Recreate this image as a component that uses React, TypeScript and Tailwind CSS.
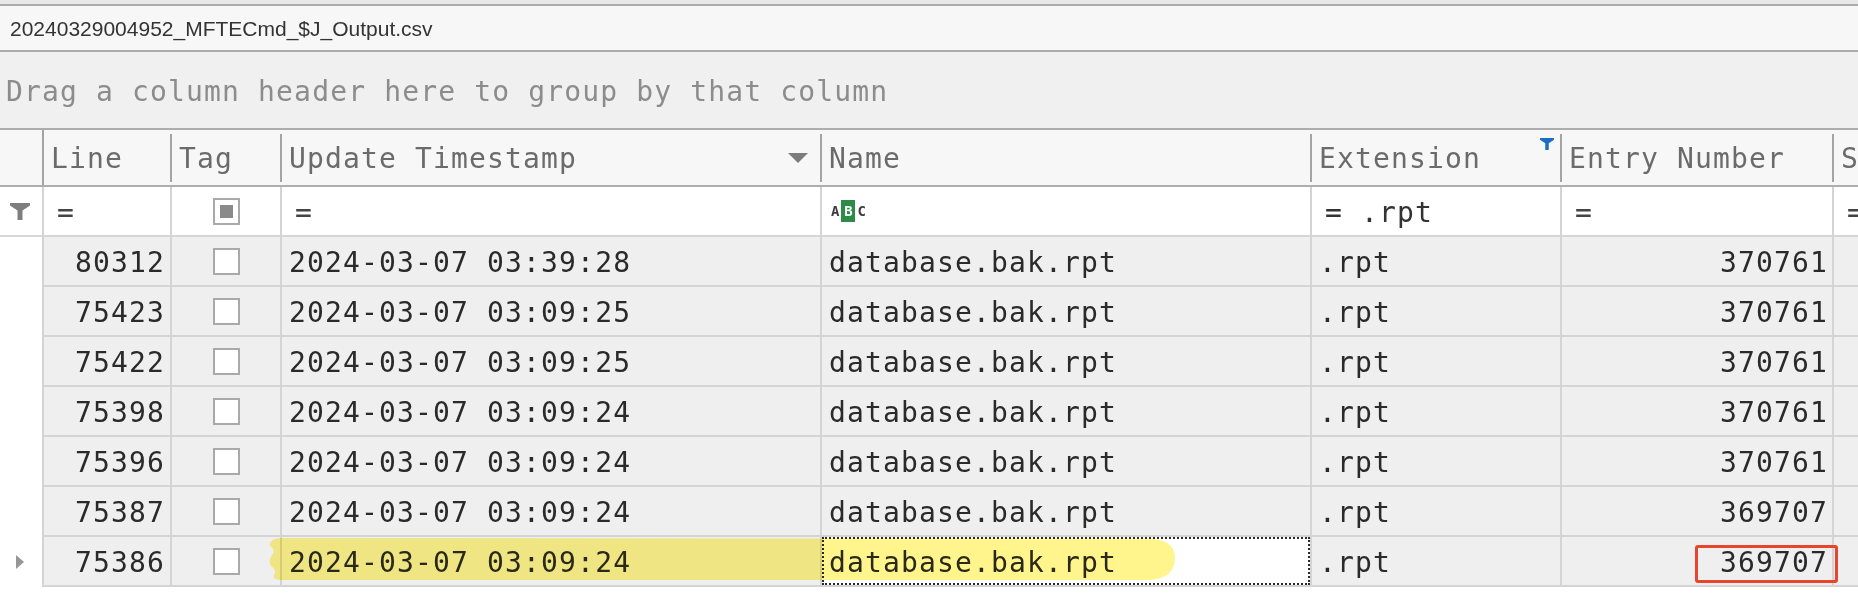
import type { ReactNode } from 'react';

type Row = {
  line: number;
  ts: string;
  name: string;
  ext: string;
  entry: number;
};

const rows: Row[] = [
  { line: 80312, ts: '2024-03-07 03:39:28', name: 'database.bak.rpt', ext: '.rpt', entry: 370761 },
  { line: 75423, ts: '2024-03-07 03:09:25', name: 'database.bak.rpt', ext: '.rpt', entry: 370761 },
  { line: 75422, ts: '2024-03-07 03:09:25', name: 'database.bak.rpt', ext: '.rpt', entry: 370761 },
  { line: 75398, ts: '2024-03-07 03:09:24', name: 'database.bak.rpt', ext: '.rpt', entry: 370761 },
  { line: 75396, ts: '2024-03-07 03:09:24', name: 'database.bak.rpt', ext: '.rpt', entry: 370761 },
  { line: 75387, ts: '2024-03-07 03:09:24', name: 'database.bak.rpt', ext: '.rpt', entry: 369707 },
  { line: 75386, ts: '2024-03-07 03:09:24', name: 'database.bak.rpt', ext: '.rpt', entry: 369707 },
];

const mono = "font-['DejaVu_Sans_Mono',monospace] text-[28px] tracking-[1.15px] leading-none";

function Funnel({ className }: { className: string }) {
  return (
    <svg viewBox="0 0 20 17" className={className}>
      <polygon points="0,0 20,0 20,2.5 12.5,7.5 12.5,17 7.5,17 7.5,7.5 0,2.5" fill="currentColor" />
    </svg>
  );
}

function HeaderCell({ label, w, extra }: { label: string; w: string; extra?: ReactNode }) {
  return (
    <div className={`${w} shrink-0 h-full flex items-center`}>
      <span className={`flex-1 pl-[7px] pt-[2px] whitespace-nowrap text-[#6b6b6b] ${mono}`}>{label}</span>
      {extra}
      <div className="w-[2px] h-[48px] bg-[#a4a4a4] shrink-0" />
    </div>
  );
}

function Checkbox({ partial }: { partial?: boolean }) {
  return (
    <div className="w-[27px] h-[27px] border-2 border-[#a9a9a9] bg-white flex items-center justify-center">
      {partial && <div className="w-[13px] h-[13px] bg-[#8a8a8a]" />}
    </div>
  );
}

export default function App() {
  return (
    <div className="w-[1858px] h-[604px] overflow-hidden bg-white">
      <div className="h-[4px] bg-[#e9e9e9]" />

      {/* file tab */}
      <div className="h-[48px] border-y-2 border-[#acacac] bg-[#f7f7f7] flex items-center pl-[10px] font-['Liberation_Sans',sans-serif] text-[21px] leading-none text-[#333]">
        20240329004952_MFTECmd_$J_Output.csv
      </div>

      {/* group panel */}
      <div className={`h-[76px] bg-[#f0f0f0] flex items-center pl-[6px] pt-[4px] whitespace-nowrap text-[#8c8c8c] ${mono}`}>
        Drag a column header here to group by that column
      </div>

      {/* column headers */}
      <div className="h-[59px] border-y-2 border-[#adadad] bg-[#f7f7f7] flex">
        <div className="w-[44px] shrink-0 border-r-2 border-[#a4a4a4]" />
        <HeaderCell label="Line" w="w-[128px]" />
        <HeaderCell label="Tag" w="w-[110px]" />
        <HeaderCell
          label="Update Timestamp"
          w="w-[540px]"
          extra={
            <svg viewBox="0 0 20 10" className="w-[20px] h-[10px] mr-[12px] shrink-0">
              <polygon points="0,0 20,0 10,10" fill="#7c7c7c" />
            </svg>
          }
        />
        <HeaderCell label="Name" w="w-[490px]" />
        <HeaderCell
          label="Extension"
          w="w-[250px]"
          extra={<Funnel className="w-[14px] h-[12px] self-start mt-[8px] mr-[6px] shrink-0 text-[#1b6ec2]" />}
        />
        <HeaderCell label="Entry Number" w="w-[272px]" />
        <HeaderCell label="Sequence Number" w="w-[320px]" />
      </div>

      {/* filter row */}
      <div className={`h-[50px] border-b-2 border-[#d6d6d6] bg-white flex ${mono}`}>
        <div className="w-[44px] shrink-0 border-r-2 border-[#d4d4d4] flex items-center pl-[10px]">
          <Funnel className="w-[20px] h-[17px] text-[#7e7e7e]" />
        </div>
        <div className="w-[128px] shrink-0 border-r-2 border-[#d4d4d4] flex items-center pl-[13px] pt-[3px] text-[#444]">=</div>
        <div className="w-[110px] shrink-0 border-r-2 border-[#d4d4d4] flex items-center justify-center">
          <Checkbox partial />
        </div>
        <div className="w-[540px] shrink-0 border-r-2 border-[#d4d4d4] flex items-center pl-[13px] pt-[3px] text-[#444]">=</div>
        <div className="w-[490px] shrink-0 border-r-2 border-[#d4d4d4] flex items-center pl-[9px]">
          <div className="flex items-center gap-[2px] font-['DejaVu_Sans_Mono',monospace] font-bold text-[14px] tracking-normal leading-none text-[#3c3c3c]">
            <span>A</span>
            <span className="w-[14px] h-[22px] bg-[#2e8b47] text-white flex items-center justify-center">B</span>
            <span>C</span>
          </div>
        </div>
        <div className="w-[250px] shrink-0 border-r-2 border-[#d4d4d4] flex items-center pl-[13px] pt-[3px] whitespace-pre text-[#333]">= .rpt</div>
        <div className="w-[272px] shrink-0 border-r-2 border-[#d4d4d4] flex items-center pl-[13px] pt-[3px] text-[#444]">=</div>
        <div className="w-[320px] shrink-0 flex items-center pl-[13px] pt-[3px] text-[#444]">=</div>
      </div>

      {/* data rows */}
      {rows.map((r, i) => {
        const last = i === rows.length - 1;
        return (
          <div key={i} className="h-[50px] flex relative">
            <div className="w-[44px] shrink-0 border-r-2 border-[#d4d4d4] bg-white flex items-center pl-[16px]">
              {last && (
                <svg viewBox="0 0 8 14" className="w-[8px] h-[14px]">
                  <polygon points="0,0 8,7 0,14" fill="#979797" />
                </svg>
              )}
            </div>
            <div className={`flex border-b-2 border-[#d4d4d4] bg-[#efefef] text-[#2a2a2a] ${mono}`}>
              <div className="w-[128px] shrink-0 border-r-2 border-[#d4d4d4] flex items-center justify-end pr-[5px] pt-[4px]">{r.line}</div>
              <div className="w-[110px] shrink-0 border-r-2 border-[#d4d4d4] flex items-center justify-center">
                <Checkbox />
              </div>
              <div className="w-[540px] shrink-0 border-r-2 border-[#d4d4d4] flex items-center pl-[7px] pt-[4px] whitespace-pre">{r.ts}</div>
              <div className="w-[490px] shrink-0 border-r-2 border-[#d4d4d4] flex">
                {last ? (
                  <div className="flex-1 bg-white border-2 border-dotted border-[#2a2a2a] flex items-center pl-[5px] pt-[4px]">{r.name}</div>
                ) : (
                  <div className="flex-1 flex items-center pl-[7px] pt-[4px]">{r.name}</div>
                )}
              </div>
              <div className="w-[250px] shrink-0 border-r-2 border-[#d4d4d4] flex items-center pl-[7px] pt-[4px]">{r.ext}</div>
              <div className="w-[272px] shrink-0 border-r-2 border-[#d4d4d4] flex items-center justify-end pr-[4px] pt-[4px]">{r.entry}</div>
              <div className="w-[320px] shrink-0" />
            </div>

            {last && (
              <>
                {/* highlighter stroke */}
                <svg viewBox="0 0 908 43" className="absolute left-[268px] top-[1px] w-[908px] h-[43px] mix-blend-multiply">
                  <path
                    d="M12 0 L886 1 Q907 3 907 21 Q906 42 878 42 L14 42 Q4 42 6 37 Q9 32 3 28 Q0 22 4 17 Q8 12 2 8 Q0 2 12 0 Z"
                    fill="#fff58c"
                  />
                </svg>
                {/* red annotation box */}
                <div className="absolute left-[1695px] top-[8px] w-[143px] h-[38px] border-[3px] border-[#e8452c] rounded-[3px]" />
              </>
            )}
          </div>
        );
      })}
    </div>
  );
}
